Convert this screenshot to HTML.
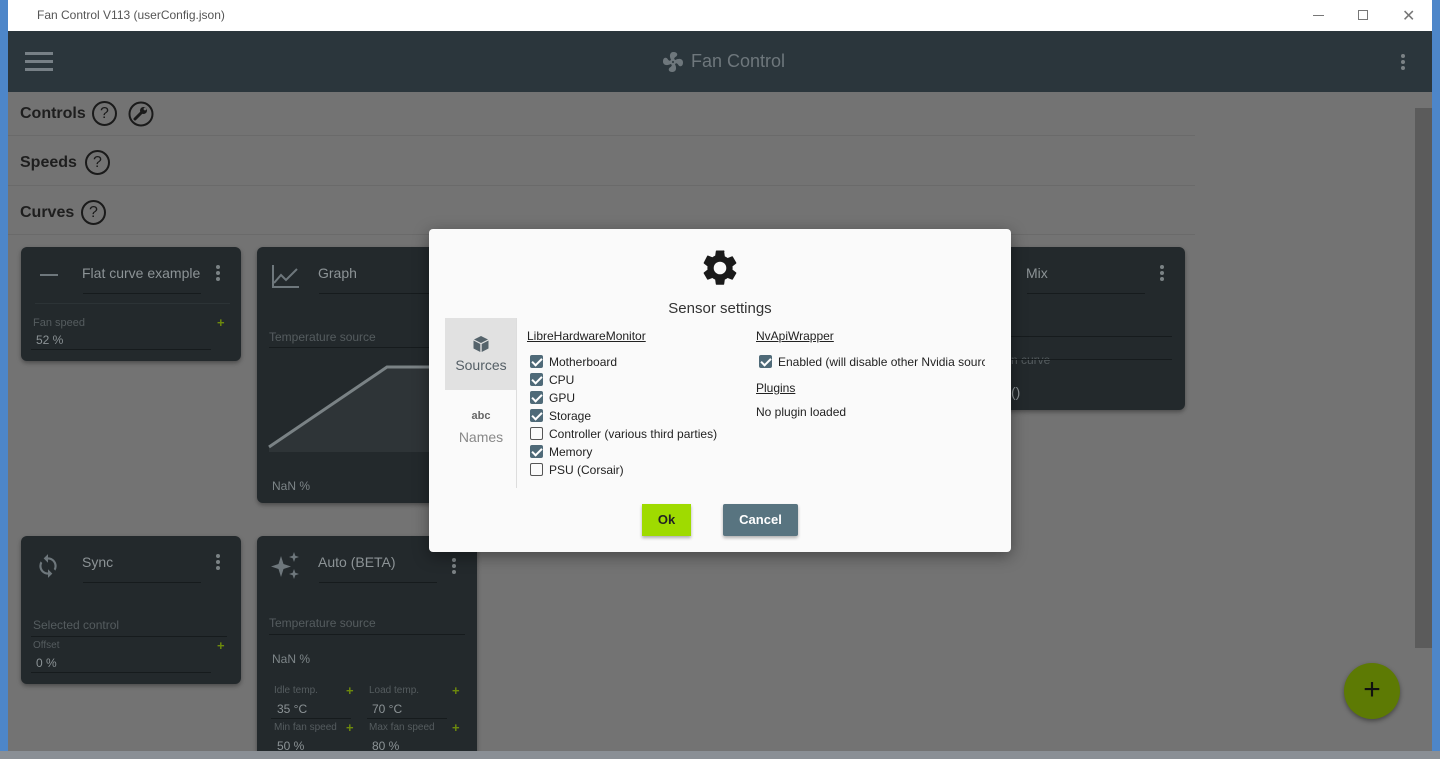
<!DOCTYPE html>
<html><head><meta charset="utf-8"><style>
*{margin:0;padding:0;box-sizing:border-box}
html,body{width:1440px;height:759px;overflow:hidden}
body{position:relative;font-family:"Liberation Sans",sans-serif;background:#4d86c9}
.a{position:absolute}
.win{position:absolute;left:8px;top:0;width:1424px;height:751px;background:#737373;overflow:hidden}
.card{position:absolute;background:#23292c;border-radius:6px;box-shadow:0 2px 4px rgba(0,0,0,.35)}
.t{position:absolute;color:#8c9396;font-size:14px}
.sm{position:absolute;color:#555c5f;font-size:11px}
.ln{position:absolute;height:1px;background:#161b1d}
.pl{position:absolute;color:#6d8a0c;font-size:13px;font-weight:bold}
.dots{position:absolute;width:4px}
.dots i{display:block;width:4px;height:4px;border-radius:2px;background:#7b8285;margin-bottom:2px}
.hd{position:absolute;left:12px;font-size:16px;font-weight:bold;color:#1e1e1e}
.q{position:absolute;width:25px;height:25px;border:2px solid #1a1a1a;border-radius:50%;font-size:16px;text-align:center;line-height:21px;color:#1a1a1a}
.sep{position:absolute;left:0;width:1187px;height:1px;background:#6a6a6a}
.cb{position:absolute;width:13px;height:13px;border-radius:2px}
.cb.on{background:#4f6a78}
.cb.on:after{content:"";position:absolute;left:4px;top:1px;width:4px;height:8px;border:solid #fff;border-width:0 2px 2px 0;transform:rotate(45deg)}
.cb.off{border:1.5px solid #555}
.lb{position:absolute;font-size:12px;color:#222}
</style></head><body>
<div class="a" style="left:0;top:751px;width:1440px;height:8px;background:#8a8f95"></div>
<div class="win">
<!-- title bar -->
<div class="a" style="left:0;top:0;width:1424px;height:31px;background:#fff"></div>
<div class="a" style="left:29px;top:8px;font-size:12px;color:#555">Fan Control V113 (userConfig.json)</div>
<div class="a" style="left:1305px;top:15px;width:11px;height:1px;background:#777"></div>
<div class="a" style="left:1350px;top:10px;width:10px;height:10px;border:1px solid #777"></div>
<div class="a" style="left:1394px;top:6px;font-size:16px;color:#777">✕</div>
<!-- header -->
<div class="a" style="left:0;top:31px;width:1424px;height:61px;background:#2b363c"></div>
<div class="a" style="left:17px;top:52px;width:28px;height:3px;background:#778086;box-shadow:0 8px 0 #778086,0 16px 0 #778086"></div>
<svg class="a" style="left:653px;top:50px" width="24" height="24" viewBox="0 0 24 24"><path fill="#6e777c" d="M12 11a1 1 0 1 0 0 2 1 1 0 0 0 0-2zm.5-9C17 2 17.1 5.6 14.7 6.8c-1 .5-1.4 1.4-1.6 2.3.5.2.9.5 1.2.9 3.7-2 7.7-1.2 7.7 2.5C22 17 18.4 17.1 17.2 14.7c-.5-1-1.4-1.4-2.3-1.6-.2.5-.5.9-.9 1.2 2 3.7 1.2 7.7-2.5 7.7C7 22 6.9 18.4 9.3 17.2c1-.5 1.4-1.4 1.6-2.3-.5-.2-.9-.5-1.2-.9C6 16 2 15.2 2 11.5 2 7 5.6 6.9 6.8 9.3c.5 1 1.4 1.4 2.3 1.6.2-.5.5-.9.9-1.2C8 6 8.8 2 12.5 2z"/></svg>
<div class="a" style="left:683px;top:51px;font-size:18px;color:#6e777c">Fan Control</div>
<div class="dots" style="left:1393px;top:54px"><i></i><i></i><i></i></div>
<!-- scrollbar -->
<div class="a" style="left:1407px;top:108px;width:17px;height:540px;background:#5b5b5b"></div>
<!-- sections -->
<div class="hd" style="top:105px">Controls</div><div class="q" style="left:84px;top:101px">?</div>
<svg class="a" style="left:120px;top:101px" width="26" height="26" viewBox="0 0 26 26"><circle cx="13" cy="13" r="11.5" fill="none" stroke="#1a1a1a" stroke-width="2"/><path d="M7 18L13 12" stroke="#1a1a1a" stroke-width="3" stroke-linecap="round"/><circle cx="15.5" cy="9.5" r="3.5" fill="#1a1a1a"/><circle cx="17" cy="8" r="1.4" fill="#737373"/></svg>
<div class="sep" style="top:135px"></div>
<div class="hd" style="top:154px">Speeds</div><div class="q" style="left:77px;top:150px">?</div>
<div class="sep" style="top:185px"></div>
<div class="hd" style="top:204px">Curves</div><div class="q" style="left:73px;top:200px">?</div>
<div class="sep" style="top:234px"></div>
<!-- card 1 -->
<div class="card" style="left:13px;top:247px;width:220px;height:114px">
 <div class="a" style="left:19px;top:27px;width:18px;height:2px;background:#6e777c"></div>
 <div class="t" style="left:61px;top:18px">Flat curve example</div>
 <div class="dots" style="left:195px;top:18px"><i></i><i></i><i></i></div>
 <div class="ln" style="left:62px;top:46px;width:118px"></div>
 <div class="ln" style="left:14px;top:56px;width:195px;background:#2c3336"></div>
 <div class="sm" style="left:12px;top:70px">Fan speed</div>
 <div class="pl" style="left:196px;top:68px">+</div>
 <div class="t" style="left:15px;top:86px;font-size:12px">52 %</div>
 <div class="ln" style="left:10px;top:102px;width:180px"></div>
</div>
<!-- card 2 -->
<div class="card" style="left:249px;top:247px;width:220px;height:256px">
 <svg class="a" style="left:14px;top:16px" width="28" height="26"><path d="M2 2V24H28M3 20L10 12L15 17L26 6" stroke="#6e777c" stroke-width="2" fill="none"/></svg>
 <div class="t" style="left:61px;top:18px">Graph</div>
 <div class="ln" style="left:62px;top:46px;width:150px"></div>
 <div class="sm" style="left:12px;top:83px;font-size:12px">Temperature source</div>
 <div class="ln" style="left:12px;top:100px;width:200px"></div>
 <svg class="a" style="left:10px;top:115px" width="210" height="90"><path d="M2 85L120 5H210V90H2Z" fill="#2e3437"/><path d="M2 85L120 5H210" stroke="#7a8285" stroke-width="3" fill="none"/></svg>
 <div class="t" style="left:15px;top:232px;font-size:12px;color:#7d8588">NaN %</div>
</div>
<!-- mix card -->
<div class="card" style="left:957px;top:247px;width:220px;height:163px">
 <div class="t" style="left:61px;top:18px">Mix</div>
 <div class="dots" style="left:195px;top:18px"><i></i><i></i><i></i></div>
 <div class="ln" style="left:62px;top:46px;width:118px"></div>
 <div class="ln" style="left:14px;top:89px;width:193px"></div>
 <div class="sm" style="left:46px;top:106px;font-size:12px">n curve</div>
 <div class="ln" style="left:14px;top:112px;width:193px"></div>
 <div class="t" style="left:46px;top:137px">()</div>
</div>
<!-- sync -->
<div class="card" style="left:13px;top:536px;width:220px;height:148px">
 <svg class="a" style="left:14px;top:16px" width="26" height="28" viewBox="0 0 24 24"><path fill="#6e777c" d="M12 4V1L8 5l4 4V6c3.31 0 6 2.69 6 6 0 1.01-.25 1.97-.7 2.8l1.46 1.46A7.93 7.93 0 0 0 20 12c0-4.42-3.58-8-8-8zm0 14c-3.31 0-6-2.69-6-6 0-1.01.25-1.97.7-2.8L5.24 7.74A7.93 7.93 0 0 0 4 12c0 4.42 3.58 8 8 8v3l4-4-4-4v3z"/></svg>
 <div class="t" style="left:61px;top:18px">Sync</div>
 <div class="dots" style="left:195px;top:18px"><i></i><i></i><i></i></div>
 <div class="ln" style="left:62px;top:46px;width:118px"></div>
 <div class="sm" style="left:12px;top:82px;font-size:12px">Selected control</div>
 <div class="ln" style="left:10px;top:100px;width:196px"></div>
 <div class="sm" style="left:12px;top:104px;font-size:10px">Offset</div>
 <div class="pl" style="left:196px;top:102px">+</div>
 <div class="t" style="left:15px;top:120px;font-size:12px">0 %</div>
 <div class="ln" style="left:10px;top:136px;width:180px"></div>
</div>
<!-- auto -->
<div class="card" style="left:249px;top:536px;width:220px;height:230px">
 <svg class="a" style="left:13px;top:14px" width="32" height="32" viewBox="0 0 32 32"><path fill="#6e777c" d="M11 6L13.5 14L21 16.5L13.5 19L11 27L8.5 19L1 16.5L8.5 14ZM24 2L25.3 5.7L29 7L25.3 8.3L24 12L22.7 8.3L19 7L22.7 5.7ZM24 19L25.3 22.7L29 24L25.3 25.3L24 29L22.7 25.3L19 24L22.7 22.7Z"/></svg>
 <div class="t" style="left:61px;top:18px">Auto (BETA)</div>
 <div class="dots" style="left:195px;top:22px"><i></i><i></i><i></i></div>
 <div class="ln" style="left:62px;top:46px;width:118px"></div>
 <div class="sm" style="left:12px;top:80px;font-size:12px">Temperature source</div>
 <div class="ln" style="left:12px;top:98px;width:196px"></div>
 <div class="t" style="left:15px;top:116px;font-size:12px;color:#7d8588">NaN %</div>
 <div class="sm" style="left:17px;top:149px;font-size:10px">Idle temp.</div><div class="pl" style="left:89px;top:147px">+</div>
 <div class="sm" style="left:112px;top:149px;font-size:10px">Load temp.</div><div class="pl" style="left:195px;top:147px">+</div>
 <div class="t" style="left:20px;top:166px;font-size:12px">35 °C</div><div class="t" style="left:115px;top:166px;font-size:12px">70 °C</div>
 <div class="ln" style="left:14px;top:182px;width:80px"></div><div class="ln" style="left:110px;top:182px;width:80px"></div>
 <div class="sm" style="left:17px;top:186px;font-size:10px">Min fan speed</div><div class="pl" style="left:89px;top:184px">+</div>
 <div class="sm" style="left:112px;top:186px;font-size:10px">Max fan speed</div><div class="pl" style="left:195px;top:184px">+</div>
 <div class="t" style="left:20px;top:203px;font-size:12px">50 %</div><div class="t" style="left:115px;top:203px;font-size:12px">80 %</div>
</div>
<!-- FAB -->
<div class="a" style="left:1336px;top:663px;width:56px;height:56px;border-radius:50%;background:#5d7a04;box-shadow:0 2px 5px rgba(0,0,0,.4);text-align:center;line-height:54px;font-size:30px;color:#111">+</div>
<!-- dialog -->
<div class="a" style="left:421px;top:229px;width:582px;height:323px;background:#fafafa;border-radius:4px;box-shadow:0 4px 16px rgba(0,0,0,.4)">
 <svg class="a" style="left:270px;top:18px" width="42" height="42" viewBox="0 0 24 24"><path fill="#1a1a1a" d="M19.14 12.94c.04-.3.06-.61.06-.94 0-.32-.02-.64-.07-.94l2.030-1.58a.49.49 0 0 0 .12-.61l-1.92-3.32a.49.49 0 0 0-.59-.22l-2.39.96c-.5-.38-1.03-.7-1.62-.94l-.36-2.54A.48.48 0 0 0 13.92 2h-3.84c-.24 0-.43.17-.47.41l-.36 2.54c-.59.24-1.13.57-1.62.94l-2.39-.96a.48.48 0 0 0-.59.22L2.74 8.87a.47.47 0 0 0 .12.61l2.03 1.58c-.05.3-.09.63-.09.94s.02.64.07.94l-2.03 1.58a.49.49 0 0 0-.12.61l1.92 3.32c.12.22.37.29.59.22l2.39-.96c.5.38 1.03.7 1.62.94l.36 2.54c.05.24.24.41.48.41h3.84c.24 0 .44-.17.47-.41l.36-2.54c.59-.24 1.130-.56 1.62-.94l2.39.96c.22.08.47 0 .59-.22l1.92-3.32a.47.47 0 0 0-.12-.61l-2.01-1.58zM12 15.6A3.6 3.6 0 1 1 12 8.4a3.6 3.6 0 0 1 0 7.2z"/></svg>
 <div class="a" style="left:0;width:582px;top:71px;text-align:center;font-size:15px;color:#333">Sensor settings</div>
 <div class="a" style="left:16px;top:89px;width:72px;height:72px;background:#e1e1e1"></div>
 <div class="a" style="left:87px;top:89px;width:1px;height:170px;background:#ddd"></div>
 <svg class="a" style="left:43px;top:106px" width="18" height="18" viewBox="0 0 18 18"><path fill="#55636b" d="M9 1L16 4.5L9 8L2 4.5ZM1.5 5.5L8.3 9V17L1.5 13.5ZM16.5 5.5V13.5L9.7 17V9Z"/></svg>
 <div class="a" style="left:16px;top:128px;width:72px;text-align:center;font-size:14px;color:#555f66">Sources</div>
 <div class="a" style="left:16px;top:181px;width:72px;text-align:center;font-size:11px;font-weight:bold;color:#666">abc</div>
 <div class="a" style="left:16px;top:200px;width:72px;text-align:center;font-size:14px;color:#888">Names</div>
 <div class="lb" style="left:98px;top:100px;text-decoration:underline">LibreHardwareMonitor</div>
 <div class="cb on" style="left:101px;top:126px"></div><div class="lb" style="left:120px;top:126px">Motherboard</div>
 <div class="cb on" style="left:101px;top:144px"></div><div class="lb" style="left:120px;top:144px">CPU</div>
 <div class="cb on" style="left:101px;top:162px"></div><div class="lb" style="left:120px;top:162px">GPU</div>
 <div class="cb on" style="left:101px;top:180px"></div><div class="lb" style="left:120px;top:180px">Storage</div>
 <div class="cb off" style="left:101px;top:198px"></div><div class="lb" style="left:120px;top:198px">Controller (various third parties)</div>
 <div class="cb on" style="left:101px;top:216px"></div><div class="lb" style="left:120px;top:216px">Memory</div>
 <div class="cb off" style="left:101px;top:234px"></div><div class="lb" style="left:120px;top:234px">PSU (Corsair)</div>
 <div class="lb" style="left:327px;top:100px;text-decoration:underline">NvApiWrapper</div>
 <div class="cb on" style="left:330px;top:126px"></div><div class="lb" style="left:349px;top:126px;width:207px;overflow:hidden;white-space:nowrap">Enabled (will disable other Nvidia sources)</div>
 <div class="lb" style="left:327px;top:152px;text-decoration:underline">Plugins</div>
 <div class="lb" style="left:327px;top:176px">No plugin loaded</div>
 <div class="a" style="left:213px;top:275px;width:49px;height:32px;background:#9fdb00;box-shadow:0 2px 3px rgba(0,0,0,.3);text-align:center;line-height:32px;font-size:13px;font-weight:bold;color:#222">Ok</div>
 <div class="a" style="left:294px;top:275px;width:75px;height:32px;background:#587480;border-radius:2px;box-shadow:0 2px 3px rgba(0,0,0,.3);text-align:center;line-height:32px;font-size:13px;font-weight:bold;color:#fff">Cancel</div>
</div>
</div>
</body></html>
